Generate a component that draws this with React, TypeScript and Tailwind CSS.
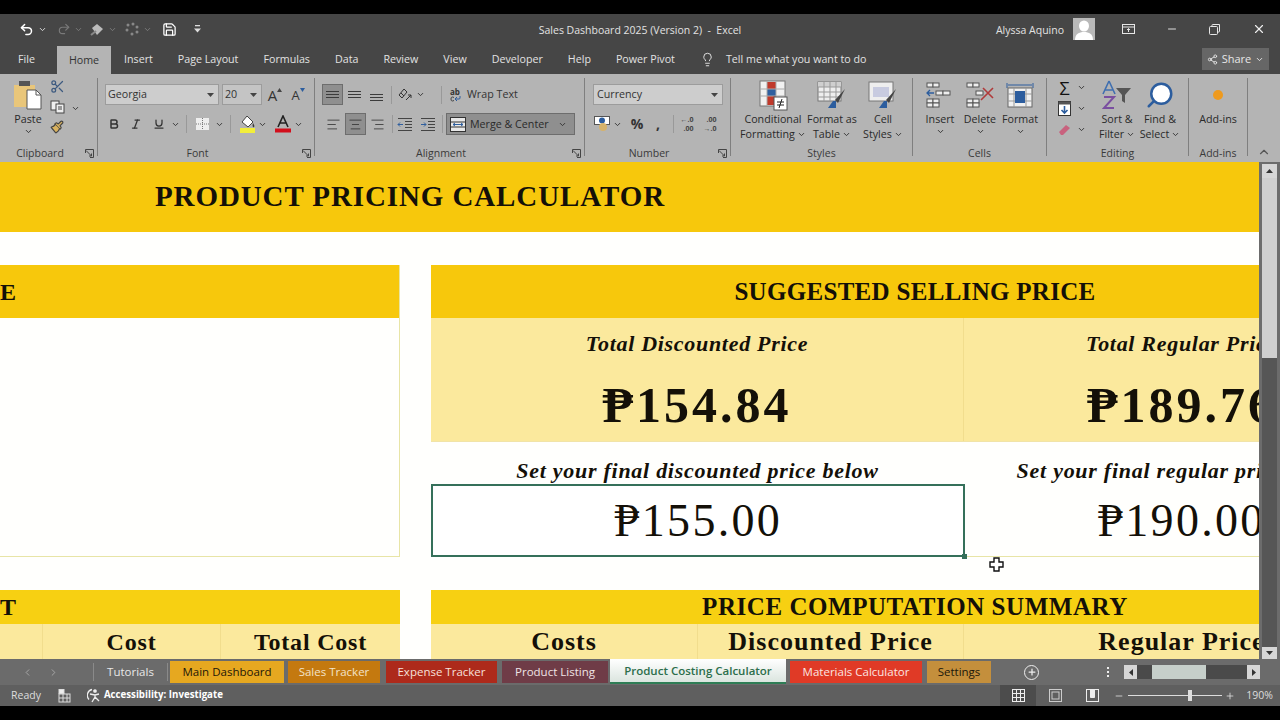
import type { ReactNode } from "react";
import {
  ChevronDown, ChevronUp, Undo2, Redo2, Scissors, Paintbrush, Save, Lightbulb, X, Minus, Plus, Share2,
  Bold, Italic, Underline, AlignLeft, AlignCenter, AlignRight, Search, ChevronLeft, ChevronRight,
} from "lucide-react";

const serif = "[font-family:'Liberation_Serif',serif]";

function S({ className = "", children }: { className?: string; children?: ReactNode }) {
  return <div className={`flex shrink-0 items-center justify-center ${className}`}>{children}</div>;
}

function Chev({ className = "" }: { className?: string }) {
  return <ChevronDown size={9} strokeWidth={2.5} className={`shrink-0 text-[#333] ${className}`} />;
}

function Launcher() {
  return (
    <svg width="9" height="9" viewBox="0 0 9 9" fill="none" stroke="#444">
      <path d="M0.5 4V0.5H8.5V8.5H5" />
      <path d="M1 1.5L6.5 7M6.5 4.5V7H4" />
    </svg>
  );
}

function Sep() {
  return <div className="mt-[4px] h-[78px] w-px shrink-0 bg-[#7f7f7f]" />;
}

function Group({ className, label, launcher, children }: { className: string; label: string; launcher?: boolean; children: ReactNode }) {
  return (
    <div className={`flex h-[88px] shrink-0 flex-col ${className}`}>
      <div className="h-[71px]">{children}</div>
      <div className="flex h-[17px] items-center text-[10.5px] text-[#3a3a3a]">
        <span className="flex-1 text-center">{label}</span>
        {launcher && <div className="flex w-[17px] justify-end pr-[3px]"><Launcher /></div>}
      </div>
    </div>
  );
}

function Big({ className, icon, top, bottom }: { className: string; icon: ReactNode; top: string; bottom?: string }) {
  return (
    <div className={`flex shrink-0 flex-col items-center pt-[4px] text-[10.7px] leading-[15px] text-[#2a2a2a] ${className}`}>
      <div className="flex h-[34px] items-center justify-center">{icon}</div>
      <span className="whitespace-nowrap">{top}</span>
      <span className="flex items-center gap-[2px] whitespace-nowrap">
        {bottom}
        <Chev />
      </span>
    </div>
  );
}

function VAlign({ pos, on }: { pos: string; on?: boolean }) {
  return (
    <S className={`h-[21px] w-[21px] ${pos} ${on ? "border border-[#6d6d6d] bg-[#8f8f8f]" : ""}`}>
      <div className="flex w-[13px] flex-col gap-[2px]">
        <div className="h-px bg-[#3b3b3b]" />
        <div className="h-px bg-[#3b3b3b]" />
        <div className="h-px bg-[#3b3b3b]" />
      </div>
    </S>
  );
}

function PasteIcon() {
  return (
    <svg width="30" height="30" viewBox="0 0 30 30">
      <rect x="1" y="5" width="21" height="22" fill="#e9c67a" />
      <rect x="6" y="1" width="11" height="5" fill="#555" />
      <path d="M14 10h9l5 5v14H14z" fill="#fff" stroke="#555" />
      <path d="M23 10v5h5" fill="none" stroke="#555" />
    </svg>
  );
}

function CopyIcon() {
  return (
    <svg width="15" height="14" viewBox="0 0 15 14" fill="#eee" stroke="#444">
      <rect x="1" y="1" width="8" height="9" />
      <rect x="6" y="4" width="8" height="9" />
      <path d="M8 7h4M8 9h4" />
    </svg>
  );
}

function BordersIcon() {
  return (
    <svg width="15" height="14" viewBox="0 0 15 14">
      <rect x="1" y="1" width="13" height="12" fill="#eee" />
      <path d="M7.5 1v12M1 7h13" stroke="#777" strokeDasharray="1 1" />
    </svg>
  );
}

function FillIcon() {
  return (
    <svg width="17" height="18" viewBox="0 0 17 18">
      <path d="M8 1l6 6-5 5-6-5z" fill="#fff" stroke="#444" />
      <path d="M14 8c1 2 2 3 1 4s-2-1-1-4z" fill="#3b3b3b" />
      <rect x="1" y="13" width="15" height="5" fill="#f2ee3a" />
    </svg>
  );
}

function ColorA() {
  return (
    <svg width="16" height="18" viewBox="0 0 16 18">
      <path d="M3 12L8 1l5 11M5 8h6" fill="none" stroke="#222" strokeWidth="1.6" />
      <rect x="0" y="13.5" width="16" height="4" fill="#d20f1c" />
    </svg>
  );
}

function FontSizeA({ up }: { up?: boolean }) {
  return (
    <div className="flex items-start">
      <span className={`${up ? "text-[15px]" : "text-[13px]"} leading-[16px] text-[#333]`}>A</span>
      <svg width="5" height="4" viewBox="0 0 5 4" className="mt-[1px]">
        <path d={up ? "M0 4L2.5 0 5 4z" : "M0 0L2.5 4 5 0z"} fill={up ? "#444" : "#2c5d9e"} />
      </svg>
    </div>
  );
}

function OrientIcon() {
  return (
    <svg width="15" height="15" viewBox="0 0 15 15" fill="none" stroke="#333">
      <path d="M1 8l5-6 3 3-5 6zM3 6l3 3" />
      <path d="M8 13l5-5M13 8h-3M13 8v3" />
    </svg>
  );
}

function IndentIcon({ out }: { out?: boolean }) {
  return (
    <svg width="16" height="13" viewBox="0 0 16 13" fill="none">
      <path d="M1 .5h14M8 3.5h7M8 6.5h7M8 9.5h7M1 12.5h14" stroke="#444" />
      <path d={out ? "M1 6.5h5M3 4.5l-2 2 2 2" : "M1 6.5h5M4 4.5l2 2-2 2"} stroke="#2f5f9f" />
    </svg>
  );
}

function MergeIcon() {
  return (
    <svg width="16" height="15" viewBox="0 0 16 15" fill="#e8e8e8" stroke="#333">
      <rect x="0.5" y="0.5" width="15" height="14" />
      <path d="M0.5 5h15M0.5 10h15" />
      <path d="M3 7.5h10M5 6l-2 1.5L5 9M11 6l2 1.5L11 9" fill="none" stroke="#2c5d9e" />
    </svg>
  );
}

function CurrencyIcon() {
  return (
    <svg width="17" height="16" viewBox="0 0 17 16">
      <rect x="0.5" y="0.5" width="15" height="8" fill="#fff" stroke="#555" />
      <circle cx="8" cy="4.5" r="3" fill="#2c5d9e" />
      <circle cx="9" cy="11" r="4" fill="#d6b36b" />
    </svg>
  );
}

function DecimalIcon({ inc }: { inc?: boolean }) {
  return (
    <div className="flex flex-col items-end text-[7px] font-bold leading-[9px] text-[#444]">
      <span>{inc ? "←.0" : ".00"}</span>
      <span>{inc ? ".00" : "→.0"}</span>
    </div>
  );
}

function CondIcon() {
  return (
    <svg width="29" height="31" viewBox="0 0 29 31">
      <rect x="1" y="1" width="25" height="25" fill="#f1f1f1" stroke="#777" />
      <rect x="8" y="2" width="9" height="7" fill="#c0392b" />
      <rect x="8" y="9" width="9" height="7" fill="#2f5f9f" />
      <rect x="8" y="16" width="9" height="9" fill="#c0392b" />
      <path d="M1 9h25M1 16h25M8 1v25M17 1v25" stroke="#aaa" />
      <rect x="15" y="17" width="13" height="13" fill="#fff" stroke="#555" />
      <path d="M18 22h7M18 25h7M23 19l-3 9" stroke="#222" />
    </svg>
  );
}

function TableIcon() {
  return (
    <svg width="30" height="28" viewBox="0 0 30 28">
      <rect x="1" y="1" width="23" height="19" fill="#eee" stroke="#777" />
      <rect x="1" y="1" width="23" height="5" fill="#cfcfcf" />
      <path d="M1 6h23M1 11h23M1 16h23M7 1v19M13 1v19M19 1v19" stroke="#999" />
      <path d="M28 8L18 19l3 3z" fill="#444" />
      <path d="M19 20l-3 0-5 7h8z" fill="#2c5d9e" />
    </svg>
  );
}

function CellStyleIcon() {
  return (
    <svg width="30" height="28" viewBox="0 0 30 28">
      <rect x="1" y="1" width="24" height="19" fill="#eee" stroke="#777" />
      <rect x="5" y="6" width="16" height="10" fill="#c8cbe0" />
      <path d="M28 8L18 19l3 3z" fill="#444" />
      <path d="M19 20l-3 0-5 7h8z" fill="#2c5d9e" />
    </svg>
  );
}

function InsertCellsIcon({ del }: { del?: boolean }) {
  return (
    <svg width="28" height="26" viewBox="0 0 28 26" fill="#eee" stroke="#555">
      <rect x="1" y="1" width="6" height="4" />
      <rect x="7" y="1" width="6" height="4" />
      <rect x="1" y="17" width="6" height="4" />
      <rect x="7" y="17" width="6" height="4" />
      <rect x="1" y="21" width="6" height="4" />
      <rect x="7" y="21" width="6" height="4" />
      <rect x="10" y="9" width="7" height="4" />
      {!del && <rect x="17" y="9" width="7" height="4" />}
      {!del && <path d="M1 11h7M4 8l-3 3 3 3" fill="none" stroke="#2c5d9e" strokeWidth="1.3" />}
      {del && <path d="M17 6l10 10M27 6L15 18" fill="none" stroke="#b03a3a" strokeWidth="1.6" />}
    </svg>
  );
}

function FormatCellsIcon() {
  return (
    <svg width="28" height="29" viewBox="0 0 28 29">
      <path d="M1 2v5M27 2v5M2 4h24" stroke="#2c5d9e" fill="none" />
      <rect x="2" y="7" width="24" height="19" fill="#f0f0f0" stroke="#666" />
      <path d="M8 7v19M20 7v19M2 13h24M2 20h24" stroke="#999" />
      <rect x="9" y="10" width="10" height="12" fill="#2c5d9e" />
    </svg>
  );
}

function SortIcon() {
  return (
    <svg width="30" height="30" viewBox="0 0 30 30">
      <path d="M7 1L1 14M7 1l6 13M3.5 10h7" fill="none" stroke="#3f6fb0" strokeWidth="1.6" />
      <path d="M2 17h10L2 28h10" fill="none" stroke="#7a4fa0" strokeWidth="2" />
      <path d="M14 8h15l-6 7v8l-3-2v-6z" fill="#555" />
    </svg>
  );
}

export default function App() {
  const tabs = ["Insert", "Page Layout", "Formulas", "Data", "Review", "View", "Developer", "Help", "Power Pivot"];
  return (
    <div className="flex h-[720px] w-[1280px] flex-col overflow-hidden bg-black [font-family:'Open_Sans',sans-serif]">
      <div className="h-[14px] shrink-0" />

      {/* title bar */}
      <div className="flex h-[30px] shrink-0 items-center bg-[#464646] text-[11px] text-[#e2e2e2]">
        <div className="flex flex-1 items-center">
          <Undo2 size={15} strokeWidth={2.4} className="ml-[19px] text-white" />
          <ChevronDown size={9} strokeWidth={2.5} className="ml-[4px] text-[#ddd]" />
          <Redo2 size={14} strokeWidth={2} className="ml-[10px] text-[#7a7a7a]" />
          <ChevronDown size={9} className="ml-[3px] text-[#888]" />
          <svg width="15" height="15" viewBox="0 0 15 15" className="ml-[7px]">
            <path d="M2 6l5-4 6 5-6 6z" fill="#bbb" />
            <path d="M1 13l5-4" stroke="#888" strokeWidth="2" />
          </svg>
          <ChevronDown size={9} className="ml-[3px] text-[#888]" />
          <svg width="14" height="14" viewBox="0 0 14 14" fill="#888" className="ml-[8px]">
            <circle cx="3" cy="3" r="1.5" /><circle cx="8" cy="2" r="1.5" /><circle cx="12" cy="5" r="1.5" />
            <circle cx="2" cy="8" r="1.5" /><circle cx="7" cy="12" r="1.5" /><circle cx="12" cy="10" r="1.5" />
          </svg>
          <ChevronDown size={9} className="ml-[4px] text-[#888]" />
          <Save size={15} strokeWidth={2} className="ml-[10px] text-white" />
          <svg width="7" height="8" viewBox="0 0 7 8" fill="#ddd" className="ml-[17px]">
            <rect x="1" y="0" width="5" height="1.3" />
            <path d="M0 3.5h7L3.5 7.5z" />
          </svg>
        </div>
        <div className="whitespace-nowrap pt-[3px] text-[10.5px]">Sales Dashboard 2025 (Version 2) &nbsp;-&nbsp; Excel</div>
        <div className="flex flex-1 items-center justify-end">
          <span className="mr-[9px] pt-[3px] text-[10.5px]">Alyssa Aquino</span>
          <div className="mr-[27px] h-[22px] w-[22px] overflow-hidden bg-[#b9b9b9]">
            <svg width="22" height="22" viewBox="0 0 22 22" fill="#fff">
              <ellipse cx="11" cy="8" rx="5" ry="5.5" />
              <path d="M2 22c0-6 4-8 9-8s9 2 9 8z" />
            </svg>
          </div>
          <svg width="13" height="10" viewBox="0 0 13 10" fill="none" stroke="#e6e6e6" className="mr-[31px]">
            <rect x="0.5" y="0.5" width="12" height="9" />
            <path d="M0.5 3h12M6.5 8V4.5M5 6l1.5-1.5L8 6" />
          </svg>
          <Minus size={12} className="mr-[31px] text-[#ddd]" />
          <svg width="11" height="11" viewBox="0 0 11 11" fill="none" stroke="#e6e6e6" className="mr-[32px]">
            <rect x="0.5" y="2.5" width="8" height="8" rx="1" />
            <path d="M3 2.5V1.2Q3 .5 3.7 .5H10.5V7.3Q10.5 8 9.8 8H8.5" />
          </svg>
          <X size={14} className="mr-[14px] text-[#eee]" />
        </div>
      </div>

      {/* ribbon tabs */}
      <div className="flex h-[30px] shrink-0 items-center bg-[#464646] text-[10.7px] text-[#e2e2e2]">
        <span className="ml-[18px] w-[39px]">File</span>
        <div className="flex h-[28px] w-[54px] items-center justify-center self-end bg-[#b4b4b4] text-[#333]">Home</div>
        <div className="ml-[13px] flex items-center gap-[25px]">
          {tabs.map((t) => (
            <span key={t} className="whitespace-nowrap">{t}</span>
          ))}
        </div>
        <Lightbulb size={15} strokeWidth={1.5} className="ml-[25px] text-[#e6e6e6]" />
        <span className="ml-[11px] whitespace-nowrap">Tell me what you want to do</span>
        <div className="ml-auto mr-[11px] flex h-[22px] w-[67px] items-center justify-center gap-[4px] bg-[#666] text-[11px] text-[#e6e6e6]">
          <Share2 size={11} />
          <span>Share</span>
          <ChevronDown size={9} strokeWidth={2.5} />
        </div>
      </div>

      {/* ribbon */}
      <div className="flex h-[88px] shrink-0 bg-[#b4b4b4]">
        <Group className="w-[97px]" label="Clipboard" launcher>
          <div className="flex pt-[4px]">
            <div className="ml-[12px] flex w-[32px] flex-col items-center text-[10.7px] leading-[15px] text-[#2a2a2a]">
              <div className="flex h-[34px] items-center"><PasteIcon /></div>
              <span>Paste</span>
              <Chev />
            </div>
            <div className="ml-[3px] flex w-[20px] flex-col items-center gap-[6px] pt-[1px]">
              <Scissors size={15} className="text-[#3d5a80]" />
              <CopyIcon />
              <Paintbrush size={14} fill="#d9b25f" className="text-[#444]" />
            </div>
            <Chev className="ml-[4px] mt-[26px]" />
          </div>
        </Group>
        <Sep />
        <Group className="w-[216px]" label="Font" launcher>
          <div className="flex flex-col gap-[8px] pt-[10px]">
            <div className="flex items-center">
              <div className="ml-[7px] flex h-[21px] w-[114px] items-center justify-between border border-[#9c9c9c] bg-[#cdcdcd] px-[2px] text-[10.7px] text-[#333]">
                <span>Georgia</span>
                <svg width="7" height="4" viewBox="0 0 7 4" fill="#444" className="mr-[2px]"><path d="M0 0h7L3.5 4z" /></svg>
              </div>
              <div className="ml-[3px] flex h-[21px] w-[40px] items-center justify-between border border-[#9c9c9c] bg-[#c4c4c4] px-[2px] text-[10.7px] text-[#333]">
                <span>20</span>
                <svg width="7" height="4" viewBox="0 0 7 4" fill="#444" className="mr-[2px]"><path d="M0 0h7L3.5 4z" /></svg>
              </div>
              <S className="ml-[3px] w-[20px]"><FontSizeA up /></S>
              <S className="ml-[3px] w-[20px]"><FontSizeA /></S>
            </div>
            <div className="flex h-[22px] items-center">
              <S className="ml-[6px] w-[20px]"><Bold size={12} strokeWidth={3} className="text-[#333]" /></S>
              <S className="ml-[2px] w-[20px]"><Italic size={12} strokeWidth={2.5} className="text-[#333]" /></S>
              <S className="ml-[3px] w-[20px]"><Underline size={12} strokeWidth={2.5} className="text-[#333]" /></S>
              <Chev className="ml-[2px]" />
              <div className="ml-[6px] h-[18px] w-px bg-[#999]" />
              <S className="ml-[5px] w-[20px]"><BordersIcon /></S>
              <Chev className="ml-[3px]" />
              <div className="ml-[6px] h-[18px] w-px bg-[#999]" />
              <S className="ml-[6px] w-[20px]"><FillIcon /></S>
              <Chev className="ml-[1px]" />
              <S className="ml-[6px] w-[20px]"><ColorA /></S>
              <Chev className="ml-[1px]" />
            </div>
          </div>
        </Group>
        <Sep />
        <Group className="w-[269px]" label="Alignment" launcher>
          <div className="flex flex-col gap-[8px] pt-[10px]">
            <div className="flex h-[21px] items-center">
              <VAlign pos="ml-[7px]" on />
              <VAlign pos="ml-[1px]" />
              <VAlign pos="ml-[1px] pt-[5px]" />
              <div className="ml-[4px] h-[18px] w-px bg-[#999]" />
              <S className="ml-[5px] w-[17px]"><OrientIcon /></S>
              <Chev className="ml-[2px]" />
              <div className="ml-[16px] h-[18px] w-px bg-[#999]" />
              <div className="ml-[8px] flex w-[14px] flex-col items-start">
                <span className="text-[8px] font-bold leading-[9px] text-[#333]">ab</span>
                <svg width="11" height="6" viewBox="0 0 11 6" fill="none" stroke="#2c5d9e">
                  <path d="M5 3h4q1 0 1-1V0M5 3l2-2M5 3l2 2" />
                  <path d="M4 1.5Q1 0 1 3t3 1.5" stroke="#444" />
                </svg>
              </div>
              <span className="ml-[3px] text-[10.7px] text-[#333]">Wrap Text</span>
            </div>
            <div className="flex h-[22px] items-center">
              <S className="ml-[8px] h-[22px] w-[21px]"><AlignLeft size={15} strokeWidth={1.3} className="text-[#333]" /></S>
              <S className="ml-[1px] h-[22px] w-[21px] border border-[#6d6d6d] bg-[#8f8f8f]"><AlignCenter size={15} strokeWidth={1.3} className="text-[#333]" /></S>
              <S className="ml-[1px] h-[22px] w-[21px]"><AlignRight size={15} strokeWidth={1.3} className="text-[#333]" /></S>
              <div className="ml-[4px] h-[18px] w-px bg-[#999]" />
              <S className="ml-[2px] w-[20px]"><IndentIcon out /></S>
              <S className="ml-[3px] w-[20px]"><IndentIcon /></S>
              <div className="ml-[4px] h-[18px] w-px bg-[#999]" />
              <div className="ml-[3px] flex h-[22px] w-[129px] items-center border border-[#6d6d6d] bg-[#8f8f8f] pl-[3px] text-[10.7px] text-[#2a2a2a]">
                <MergeIcon />
                <span className="ml-[4px]">Merge &amp; Center</span>
                <Chev className="ml-auto mr-[7px]" />
              </div>
            </div>
          </div>
        </Group>
        <Sep />
        <Group className="w-[145px]" label="Number" launcher>
          <div className="flex flex-col gap-[8px] pt-[10px]">
            <div className="ml-[8px] flex h-[21px] w-[130px] items-center justify-between border border-[#9c9c9c] bg-[#cdcdcd] px-[3px] text-[10.7px] text-[#333]">
              <span>Currency</span>
              <svg width="7" height="4" viewBox="0 0 7 4" fill="#444" className="mr-[1px]"><path d="M0 0h7L3.5 4z" /></svg>
            </div>
            <div className="flex h-[22px] items-center">
              <S className="ml-[8px] w-[18px]"><CurrencyIcon /></S>
              <Chev className="ml-[2px]" />
              <S className="ml-[6px] w-[18px] text-[14px] font-bold leading-none text-[#333]">%</S>
              <S className="ml-[3px] w-[18px] text-[14px] font-bold leading-none text-[#333]">,</S>
              <div className="ml-[6px] h-[18px] w-px bg-[#999]" />
              <S className="ml-[3px] w-[20px]"><DecimalIcon inc /></S>
              <S className="ml-[3px] w-[20px]"><DecimalIcon /></S>
            </div>
          </div>
        </Group>
        <Sep />
        <Group className="w-[181px]" label="Styles">
          <div className="flex">
            <Big className="ml-[8px] w-[68px]" icon={<CondIcon />} top="Conditional" bottom="Formatting" />
            <Big className="ml-[0px] w-[50px]" icon={<TableIcon />} top="Format as" bottom="Table" />
            <Big className="ml-[4px] w-[44px]" icon={<CellStyleIcon />} top="Cell" bottom="Styles" />
          </div>
        </Group>
        <Sep />
        <Group className="w-[133px]" label="Cells">
          <div className="flex pl-[8px]">
            <Big className="w-[38px]" icon={<InsertCellsIcon />} top="Insert" />
            <Big className="ml-[1px] w-[40px]" icon={<InsertCellsIcon del />} top="Delete" />
            <Big className="w-[40px]" icon={<FormatCellsIcon />} top="Format" />
          </div>
        </Group>
        <Sep />
        <Group className="w-[141px]" label="Editing">
          <div className="flex">
            <div className="ml-[9px] flex w-[34px] flex-col gap-[6px] pt-[6px]">
              <div className="flex h-[15px] items-center">
                <S className="w-[17px] text-[18px] leading-none text-[#111]">Σ</S>
                <Chev className="ml-[4px]" />
              </div>
              <div className="flex h-[15px] items-center">
                <S className="w-[17px]">
                  <svg width="13" height="15" viewBox="0 0 13 15">
                    <rect x="0.5" y="0.5" width="12" height="14" fill="#fff" stroke="#333" />
                    <rect x="0.5" y="0.5" width="12" height="3" fill="#555" />
                    <path d="M6.5 5v7M3.5 9l3 3 3-3" fill="none" stroke="#2c5d9e" strokeWidth="1.6" />
                  </svg>
                </S>
                <Chev className="ml-[4px]" />
              </div>
              <div className="flex h-[15px] items-center">
                <S className="w-[17px]">
                  <svg width="13" height="12" viewBox="0 0 13 12"><path d="M1 8l7-7 4 3-7 7H3z" fill="#c8627e" /></svg>
                </S>
                <Chev className="ml-[4px]" />
              </div>
            </div>
            <Big className="ml-[7px] w-[40px]" icon={<SortIcon />} top="Sort &" bottom="Filter" />
            <Big className="ml-[2px] w-[42px]" icon={<Search size={30} strokeWidth={2} className="-scale-x-100 fill-white text-[#2c5d9e]" />} top="Find &" bottom="Select" />
          </div>
        </Group>
        <Sep />
        <Group className="w-[58px]" label="Add-ins">
          <div className="flex flex-col items-center pt-[4px] text-[10.7px] leading-[15px] text-[#2a2a2a]">
            <div className="flex h-[34px] items-center"><div className="h-[10px] w-[10px] rounded-full bg-[#ee9a1e]" /></div>
            <span>Add-ins</span>
          </div>
        </Group>
        <Sep />
        <div className="flex flex-1 items-end justify-center pb-[3px]">
          <ChevronUp size={14} className="text-[#555]" />
        </div>
      </div>

      {/* sheet */}
      <div className="relative flex h-[497px] shrink-0">
        <div className={`flex w-[1259px] flex-col overflow-hidden bg-[#fffffd] font-bold text-[#141008] ${serif}`}>
          <div className="flex h-[70px] shrink-0 items-center bg-[#f7c80c] pl-[155px] text-[29px] tracking-[0.9px] whitespace-nowrap">
            PRODUCT PRICING CALCULATOR
          </div>
          <div className="h-[33px] shrink-0" />

          <div className="flex shrink-0">
            <div className="h-[292px] w-[400px] shrink-0 border-r border-b border-[#e8e5a6]">
              <div className="flex h-[53px] items-center bg-[#f7c80c] text-[24px]">E</div>
            </div>
            <div className="ml-[31px] w-[968px] shrink-0">
              <div className="flex h-[53px] items-center justify-center bg-[#f7c80c] text-[25px] tracking-[0.3px]">SUGGESTED SELLING PRICE</div>
              <div className="flex h-[124px] border-b border-[#f1e4a8] bg-[#fbe99d]">
                <div className="flex w-[533px] flex-col items-center border-r border-[#f1dd8d]">
                  <span className="mt-[13px] text-[22px] italic leading-[26px] tracking-[0.7px]">Total Discounted Price</span>
                  <span className="mt-[22px] text-[50px] leading-[52px] tracking-[3px]">₱154.84</span>
                </div>
                <div className="flex flex-1 flex-col items-center">
                  <span className="mt-[13px] text-[22px] italic leading-[26px] tracking-[0.7px]">Total Regular Price</span>
                  <span className="mt-[22px] text-[50px] leading-[52px] tracking-[3px]">₱189.76</span>
                </div>
              </div>
              <div className="flex h-[115px] border-b border-[#e8e5a6]">
                <div className="flex w-[533px] flex-col items-center">
                  <div className="flex h-[42px] shrink-0 items-end whitespace-nowrap pb-[0px] text-[22px] italic leading-[26px] tracking-[0.73px]">Set your final discounted price below</div>
                  <div className="relative z-10 flex h-[73px] w-[534px] shrink-0 items-center justify-center self-start border-2 border-[#35705a] bg-white text-[46px] font-normal tracking-[2.3px]">
                    ₱155.00
                    <div className="absolute -bottom-[4px] -right-[4px] h-[5px] w-[5px] bg-[#35705a]" />
                  </div>
                </div>
                <div className="flex flex-1 flex-col items-center">
                  <div className="flex h-[42px] shrink-0 items-end whitespace-nowrap pb-[0px] text-[22px] italic leading-[26px] tracking-[0.73px]">Set your final regular price below</div>
                  <div className="flex h-[72px] items-center text-[46px] font-normal tracking-[2.3px]">₱190.00</div>
                </div>
              </div>
            </div>
          </div>

          <div className="h-[33px] shrink-0" />

          <div className="flex shrink-0">
            <div className="w-[400px] shrink-0">
              <div className="flex h-[34px] items-center bg-[#f7d012] text-[24px]">T</div>
              <div className="flex h-[35px] bg-[#fbe99d] text-[24px] tracking-[0.8px]">
                <div className="w-[43px] border-r border-[#f1dd8d]" />
                <div className="flex w-[178px] items-center justify-center border-r border-[#f1dd8d]">Cost</div>
                <div className="flex flex-1 items-center justify-center">Total Cost</div>
              </div>
            </div>
            <div className="ml-[31px] w-[968px] shrink-0">
              <div className="flex h-[34px] items-center justify-center bg-[#f7d012] text-[25px] tracking-[0.55px]">PRICE COMPUTATION SUMMARY</div>
              <div className="flex h-[35px] bg-[#fbe99d] text-[26px] tracking-[1px]">
                <div className="flex w-[267px] items-center justify-center border-r border-[#f1dd8d]">Costs</div>
                <div className="flex w-[266px] items-center justify-center border-r border-[#f1dd8d]">Discounted Price</div>
                <div className="flex flex-1 items-center justify-center">Regular Price</div>
              </div>
            </div>
          </div>
        </div>

        {/* vertical scrollbar */}
        <div className="flex w-[21px] flex-col items-center bg-[#6c6c6c] pt-[2px]">
          <div className="flex h-[14px] w-[15px] items-center justify-center bg-[#d6d6d6]">
            <svg width="7" height="4" viewBox="0 0 7 4" fill="#333"><path d="M0 4h7L3.5 0z" /></svg>
          </div>
          <div className="h-[180px] w-[15px] bg-[#cfcfcf]" />
          <div className="w-[15px] flex-1 bg-[#565656]" />
          <div className="flex h-[12px] w-[15px] items-center justify-center bg-[#d6d6d6]">
            <svg width="7" height="4" viewBox="0 0 7 4" fill="#333"><path d="M0 0h7L3.5 4z" /></svg>
          </div>
        </div>

        {/* mouse cursor */}
        <svg width="15" height="15" viewBox="0 0 15 15" className="absolute left-[989px] top-[395px]">
          <path d="M5 1h5v4h4v5h-4v4H5v-4H1V5h4z" fill="#fff" stroke="#111" strokeWidth="1.4" />
        </svg>
      </div>

      {/* sheet tabs */}
      <div className="flex h-[26px] shrink-0 items-center bg-[#6b6b6b] text-[11.5px]">
        <ChevronLeft size={11} className="ml-[22px] text-[#aaa]" />
        <ChevronRight size={11} className="ml-[15px] text-[#aaa]" />
        <div className="ml-[34px] h-[18px] w-px bg-[#8a8a8a]" />
        <S className="w-[73px] h-[21px] text-[#e8e8e8]">Tutorials</S>
        <div className="h-[18px] w-px bg-[#8a8a8a]" />
        <S className="ml-[2px] h-[22px] w-[114px] bg-[#e6a820] text-[#1e1608]">Main Dashboard</S>
        <S className="ml-[4px] h-[22px] w-[92px] bg-[#c4790f] text-[#f3e3c8]">Sales Tracker</S>
        <S className="ml-[6px] h-[22px] w-[111px] bg-[#ad2a1b] text-[#f6e1dc]">Expense Tracker</S>
        <S className="ml-[5px] h-[22px] w-[106px] bg-[#6f3c47] text-[#f0e4e6]">Product Listing</S>
        <S className="ml-[2px] h-[25px] w-[176px] self-start border-b-2 border-[#2e7d55] bg-gradient-to-b from-white to-[#dbe5df] font-semibold text-[#2c6e4b]">Product Costing Calculator</S>
        <S className="ml-[4px] h-[22px] w-[132px] bg-[#e03a26] text-[#fbe6e2]">Materials Calculator</S>
        <S className="ml-[5px] h-[22px] w-[64px] bg-[#c48f3c] text-[#20170a]">Settings</S>
        <div className="ml-[33px] flex h-[15px] w-[15px] items-center justify-center rounded-full border-[1.5px] border-[#eee]">
          <Plus size={10} strokeWidth={3} className="text-[#eee]" />
        </div>
        <div className="ml-[68px] flex flex-col gap-[2px]">
          <div className="h-[2px] w-[2px] bg-[#eee]" />
          <div className="h-[2px] w-[2px] bg-[#eee]" />
          <div className="h-[2px] w-[2px] bg-[#eee]" />
        </div>
        <div className="ml-[15px] flex h-[14px] items-center">
          <div className="flex h-[14px] w-[13px] items-center justify-center bg-[#d6d6d6]">
            <svg width="4" height="7" viewBox="0 0 4 7" fill="#333"><path d="M4 0v7L0 3.5z" /></svg>
          </div>
          <div className="h-[14px] w-[15px] bg-[#4a4a4a]" />
          <div className="h-[14px] w-[54px] bg-[#c6cfca]" />
          <div className="h-[14px] w-[41px] bg-[#4a4a4a]" />
          <div className="flex h-[14px] w-[13px] items-center justify-center bg-[#d6d6d6]">
            <svg width="4" height="7" viewBox="0 0 4 7" fill="#333"><path d="M0 0v7l4-3.5z" /></svg>
          </div>
        </div>
      </div>

      {/* status bar */}
      <div className="flex h-[21px] shrink-0 items-center bg-[#5f5f5f] text-[10.5px] text-[#ddd]">
        <span className="ml-[11px]">Ready</span>
        <svg width="13" height="14" viewBox="0 0 13 14" fill="none" stroke="#ddd" className="ml-[17px]">
          <rect x="1" y="5" width="11" height="8" />
          <path d="M1 9h11M5 5v8M9 5v8" />
          <rect x="1" y="0.5" width="5" height="4" fill="#eee" />
        </svg>
        <svg width="15" height="15" viewBox="0 0 15 15" fill="none" stroke="#eee" strokeWidth="1.3" className="ml-[16px]">
          <path d="M5 1.5a6 6 0 0 0-3 10" />
          <circle cx="8" cy="3" r="1.2" fill="#eee" />
          <path d="M3 6l5 1 4-1M8 7l0 2-3 5M8 9l4 4" />
        </svg>
        <span className="ml-[2px] text-[9.7px] font-bold text-white">Accessibility: Investigate</span>
        <div className="ml-auto flex h-[21px] w-[36px] items-center justify-center bg-[#4c4c4c]">
          <svg width="13" height="13" viewBox="0 0 13 13" fill="none" stroke="#eee">
            <rect x="0.5" y="0.5" width="12" height="12" />
            <path d="M4.5 .5v12M8.5 .5v12M.5 4.5h12M.5 8.5h12" />
          </svg>
        </div>
        <S className="ml-[1px] w-[37px]">
          <svg width="13" height="13" viewBox="0 0 13 13" fill="none" stroke="#ccc">
            <rect x="0.5" y="0.5" width="12" height="12" />
            <rect x="3" y="3" width="7" height="7" />
          </svg>
        </S>
        <S className="w-[37px]">
          <svg width="13" height="13" viewBox="0 0 13 13" fill="none" stroke="#eee">
            <rect x="0.5" y="0.5" width="12" height="12" />
            <path d="M4.5 .5v8h4v-8" fill="#eee" />
          </svg>
        </S>
        <Minus size={10} className="ml-[3px]" />
        <div className="ml-[4px] flex h-[11px] w-[94px] items-center">
          <div className="h-px w-[60px] bg-[#ddd]" />
          <div className="h-[11px] w-[4px] bg-[#ddd]" />
          <div className="h-px flex-1 bg-[#ddd]" />
        </div>
        <Plus size={10} className="ml-[3px]" />
        <span className="ml-[11px] mr-[7px]">190%</span>
      </div>

      <div className="flex-1" />
    </div>
  );
}
